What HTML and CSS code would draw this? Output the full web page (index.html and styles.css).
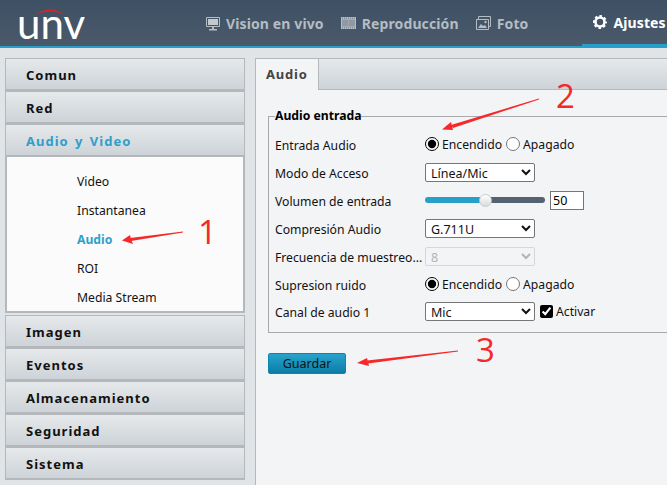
FILE: index.html
```html
<!doctype html>
<html>
    <head>
        <meta charset="utf-8">
        <title>Audio</title>
        <link rel="stylesheet" href="styles.css">
    </head>
    <body>
        <header class="topbar">
            <div class="logo">
                <svg class="logo-arc" width="28" height="7" viewBox="0 0 28 7"><path d="M0 6.500Q14 -3.500 28 6.500Q14 .5 0 6.500Z" fill="#d8232a"/></svg>
                <span>unv</span>
            </div>
            <nav class="nav">
                <a class="nav-item">
                    <svg class="icon-screen" width="14" height="14" viewBox="0 0 14 14"><path d="M.5.500h13v9H.5z" fill="none" stroke="#b5bcc3"/><path d="M2 2h10v6H2z" fill="#c3c9cf"/><path d="M6 10h2v2h3v1.500H3V12h3z" fill="#b5bcc3"/></svg>
                    Vision en vivo
                </a>
                <a class="nav-item">
                    <svg width="15" height="12" viewBox="0 0 15 12"><path d="M0 0h15v12H0z" fill="#b5bcc3"/><path d="M1 2.500h6.300v7H1zM7.700 2.500H14v7H7.700z" fill="#8f99a4"/><path d="M1 .7h1v.9H1zM3 .7h1v.9H3zM5 .7h1v.9H5zM7 .7h1v.9H7zM9 .7h1v.9H9zM11 .7h1v.9h-1zM13 .7h1v.9h-1zM1 10.400h1v.9H1zM3 10.400h1v.9H3zM5 10.400h1v.9H5zM7 10.400h1v.9H7zM9 10.400h1v.9H9zM11 10.400h1v.9h-1zM13 10.400h1v.9h-1z" fill="#4a5c6f"/></svg>
                    Reproducción
                </a>
                <a class="nav-item">
                    <svg width="15" height="14" viewBox="0 0 15 14"><path d="M2.500 3.500V.5h12v10h-2" fill="none" stroke="#b5bcc3"/><path d="M.5 3.500h12v10H.5z" fill="none" stroke="#b5bcc3"/><path d="M2 12l3-4 2 2 2-1 2 3z" fill="#b5bcc3"/><circle cx="9.500" cy="6" r="1.200" fill="#b5bcc3"/></svg>
                    Foto
                </a>
                <a class="nav-item active">
                    <svg width="14" height="14" viewBox="0 0 14 14"><circle cx="7" cy="7" r="4.500" fill="none" stroke="#fff" stroke-width="2.600"/><circle cx="7" cy="7" r="6" fill="none" stroke="#fff" stroke-width="2" stroke-dasharray="2.600 2.110" stroke-dashoffset="1.300"/></svg>
                    Ajustes
                </a>
            </nav>
        </header>

        <div class="page">
            <aside class="sidebar">
                <div class="menu-title">Comun</div>
                <div class="menu-title">Red</div>
                <div class="menu-title open">Audio y Video</div>
                <ul class="submenu">
                    <li>Video</li>
                    <li>Instantanea</li>
                    <li class="current">Audio</li>
                    <li>ROI</li>
                    <li>Media Stream</li>
                </ul>
                <div class="menu-title">Imagen</div>
                <div class="menu-title">Eventos</div>
                <div class="menu-title">Almacenamiento</div>
                <div class="menu-title">Seguridad</div>
                <div class="menu-title">Sistema</div>
            </aside>

            <main class="panel">
                <div class="tabs">
                    <div class="tab">Audio</div>
                </div>
                <div class="content">
                    <fieldset class="group">
                        <legend>Audio entrada</legend>
                        <div class="row">
                            <label>Entrada Audio</label>
                            <div class="control">
                                <input type="radio" name="entrada" checked><span>Encendido</span>
                                <input type="radio" name="entrada"><span>Apagado</span>
                            </div>
                        </div>
                        <div class="row">
                            <label>Modo de Acceso</label>
                            <div class="control"><select><option>Línea/Mic</option></select></div>
                        </div>
                        <div class="row">
                            <label>Volumen de entrada</label>
                            <div class="control">
                                <input class="slider" type="range" min="0" max="100" value="50">
                                <input class="number" type="text" value="50">
                            </div>
                        </div>
                        <div class="row">
                            <label>Compresión Audio</label>
                            <div class="control"><select><option>G.711U</option></select></div>
                        </div>
                        <div class="row">
                            <label>Frecuencia de muestreo...</label>
                            <div class="control"><select disabled><option>8</option></select></div>
                        </div>
                        <div class="row">
                            <label>Supresion ruido</label>
                            <div class="control">
                                <input type="radio" name="ruido" checked><span>Encendido</span>
                                <input type="radio" name="ruido"><span>Apagado</span>
                            </div>
                        </div>
                        <div class="row last">
                            <label>Canal de audio 1</label>
                            <div class="control">
                                <select><option>Mic</option></select>
                                <input class="check" type="checkbox" checked><span>Activar</span>
                            </div>
                        </div>
                    </fieldset>
                    <button class="save">Guardar</button>
                </div>
            </main>
        </div>

        <!-- red notes drawn over the screenshot -->
        <svg class="notes" width="667" height="485" viewBox="0 0 667 485">
            <path d="M183 231.500L183 232.500 131 241 130 238Z" fill="#f5282a"/>
            <path d="M122 240.500L130 235 131 239 133 244Z" fill="#f5282a"/>
            <path d="M539 98.500L539 99.500 453 128 451 125Z" fill="#f5282a"/>
            <path d="M442 129.500L451 122 452 126 453 130Z" fill="#f5282a"/>
            <path d="M458 350.500L458 351.500 368 363.500 367 360.500Z" fill="#f5282a"/>
            <path d="M357 363L367 358 368 362 369 366Z" fill="#f5282a"/>
        </svg>
        <span class="note note-1">1</span>
        <span class="note note-2">2</span>
        <span class="note note-3">3</span>
    </body>
</html>
```

FILE: styles.css
```css
html,
body {
    margin: 0;
    height: 100%;
    overflow: hidden;
}

* {
    box-sizing: border-box;
    font-family: "Noto Sans", "Open Sans", Arial, sans-serif;
}

body {
    background-color: #e0e4e7;
    font-size: 12.200px;
    color: #111;
}

.topbar {
    display: flex;
    height: 48px;
    background: linear-gradient(#3e5064, #4a5a6b);
    border-bottom: 2px solid #27a0c9;
}

.logo {
    position: relative;
    flex: none;
    width: 206px;
    padding-left: 17px;
    color: #fff;
    font-size: 42px;
    line-height: 46px;
}

.logo span {
    font-family: "Lato", sans-serif;
    font-weight: 400;
}

.logo-arc {
    position: absolute;
    left: 36px;
    top: 8px;
}

.nav {
    display: flex;
    flex: 1;
    min-width: 0;
}

.nav-item {
    display: flex;
    align-items: center;
    gap: 6px;
    padding-right: 17px;
    height: 46px;
    font-size: 14px;
    font-weight: 700;
    letter-spacing: .12px;
    color: #b5bcc3;
}

.icon-screen {
    margin-top: 2px;
}

.nav-item.active {
    flex: 1;
    margin-left: 37px;
    padding: 0 0 0 11px;
    height: 48px;
    color: #fff;
    white-space: nowrap;
    border-bottom: 4px solid #27a0c9;
}

.page {
    display: flex;
    gap: 10px;
    padding: 10px 0 0 5px;
    height: 437px;
}

.sidebar {
    flex: none;
    width: 240px;
}

.menu-title {
    height: 33px;
    border: 1px solid #b5b8ba;
    border-bottom-width: 2px;
    padding-left: 20px;
    font-size: 13px;
    font-weight: 700;
    line-height: 32px;
    letter-spacing: 1px;
    word-spacing: 2px;
    color: #111;
    background: linear-gradient(#e6e9eb, #cdd3d8);
}

.menu-title.open {
    color: #2f9fc9;
}

.submenu {
    list-style: none;
    margin: -1px 0 2px;
    padding: 10px 0 0 70px;
    height: 157px;
    border: 2px solid #b5b8ba;
    border-top-width: 1px;
    background-color: #fbfbfb;
}

.submenu li {
    height: 29px;
    line-height: 29px;
}

.submenu .current {
    font-weight: 700;
    color: #2f9fc9;
}

.panel {
    flex: 1;
    min-width: 0;
    display: flex;
    flex-direction: column;
    border-left: 1px solid #b5b8ba;
    background-color: #f3f4f6;
}

.tabs {
    flex: none;
    height: 32px;
    border-top: 1px solid #b5b8ba;
    border-bottom: 1px solid #b5b8ba;
    background: linear-gradient(#e6e9eb, #cdd3d8);
}

.tab {
    width: 63px;
    height: 31px;
    border-right: 1px solid #b5b8ba;
    background-color: #f3f4f6;
    padding-left: 10px;
    font-size: 13px;
    font-weight: 700;
    line-height: 30px;
    letter-spacing: .8px;
    color: #444;
}

.content {
    padding: 19px 0 0 12px;
}

.group {
    margin: 0 -4px 0 0;
    padding: 8px 6px 6px 6px;
    height: 224px;
    border: 1px solid #a7a9ab;
}

.group legend {
    padding: 0;
    font-size: 12.200px;
    font-weight: 700;
    line-height: 14px;
    color: #000;
}

.row {
    display: flex;
    align-items: center;
    height: 28px;
}

.row.last {
    margin-top: -1px;
}

.row label {
    flex: none;
    width: 150px;
    white-space: nowrap;
}

.control {
    display: flex;
    align-items: center;
    margin-top: -2px;
}

.control input[type="radio"] {
    width: 14px;
    height: 14px;
    margin: 0 3px 0 0;
    accent-color: #000;
}

.control span + input[type="radio"] {
    margin-left: 4px;
}

select {
    width: 110px;
    height: 19px;
    padding: 0 0 0 1px;
    font-size: 12.500px;
    color: #111;
    background-color: #fff;
    border: 1px solid #767676;
    border-radius: 2px;
}

select:disabled {
    color: #999;
    border-color: #ccc;
    background-color: #f3f4f6;
}

.slider {
    -webkit-appearance: none;
    appearance: none;
    width: 120px;
    height: 6px;
    margin: 0 5px 0 0;
    border-radius: 3px;
    background: linear-gradient(to right, #27a0c9 50%, #55626f 50%);
}

.slider::-webkit-slider-thumb {
    -webkit-appearance: none;
    width: 13px;
    height: 13px;
    border-radius: 50%;
    border: 1px solid #c8ccd0;
    background: linear-gradient(#fff, #d8dbde);
}

.number {
    width: 34px;
    height: 19px;
    padding: 0 2px;
    font-size: 12.500px;
    border: 1px solid #767676;
    background-color: #fff;
}

.check {
    width: 13px;
    height: 13px;
    margin: 0 3px 0 5px;
    accent-color: #000;
}

.save {
    display: block;
    width: 78px;
    height: 21px;
    margin-top: 20px;
    padding: 0;
    border: 1px solid #0c85ad;
    border-radius: 2px;
    font-size: 12.500px;
    color: #111;
    background: linear-gradient(#28a3cd, #0a7da5);
}

.notes {
    position: absolute;
    left: 0;
    top: 0;
    pointer-events: none;
}

.note {
    position: absolute;
    font-family: "Open Sans", sans-serif;
    font-size: 33px;
    line-height: 34px;
    color: #f5282a;
}

.note-1 {
    left: 198px;
    top: 215px;
}

.note-2 {
    left: 556px;
    top: 79px;
}

.note-3 {
    left: 476px;
    top: 333px;
}
```
